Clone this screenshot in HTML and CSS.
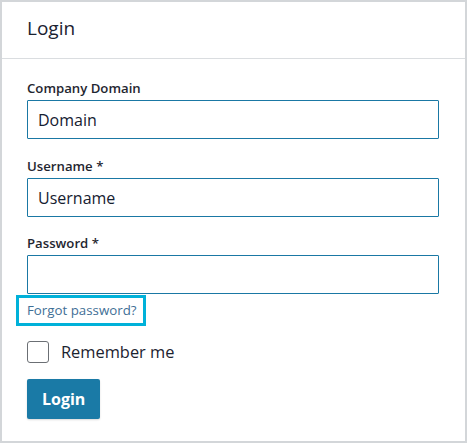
FILE: index.html
```html
<!DOCTYPE html>
<html lang="en">
<head>
<meta charset="utf-8">
<title>Login</title>
<link rel="stylesheet" href="styles.css">
</head>
<body>
<div class="card">
  <div class="card-header">Login</div>
  <form class="card-body">
    <div class="field">
      <label class="label" for="domain">Company Domain</label>
      <input class="input" id="domain" type="text" value="Domain">
    </div>
    <div class="field field-mid">
      <label class="label" for="user">Username *</label>
      <input class="input" id="user" type="text" value="Username">
    </div>
    <div class="field field-last">
      <label class="label" for="pw">Password *</label>
      <input class="input" id="pw" type="password">
    </div>
    <div class="forgot-row"><a class="forgot" href="#">Forgot password?</a></div>
    <label class="remember"><span class="check"></span><span>Remember me</span></label>
    <button class="btn" type="button">Login</button>
  </form>
</div>
</body>
</html>
```
FILE: styles.css
```css
* { box-sizing: border-box; }
html, body { margin: 0; padding: 0; }
body {
  width: 467px;
  height: 443px;
  background: #d3d6d9;
  padding: 2px;
  font-family: "Open Sans", "Noto Sans", sans-serif;
  color: #1c2330;
}
.card {
  width: 463px;
  height: 439px;
  background: #ffffff;
}
.card-header {
  height: 57px;
  border-bottom: 1px solid #dadde0;
  padding: 13px 0 0 25px;
  font-size: 19px;
  line-height: 26px;
  color: #1a2230;
}
.card-body {
  margin: 0;
  padding: 20px 25px 0 25px;
  display: flex;
  flex-direction: column;
  align-items: flex-start;
}
.field {
  display: flex;
  flex-direction: column;
  width: 412px;
  margin-bottom: 18px;
}
.field-mid { margin-bottom: 17px; }
.field-last { margin-bottom: 0; }
.label {
  font-size: 13.2px;
  line-height: 18px;
  font-weight: 600;
  color: #1f2630;
  margin-bottom: 3px;
}
.input {
  width: 412px;
  height: 39px;
  border: 1px solid #1a78a4;
  border-radius: 1px;
  padding: 0 10px;
  font-family: "Open Sans", "Noto Sans", sans-serif;
  font-size: 16px;
  color: #152030;
  background: #fff;
  outline: none;
}
.forgot-row {
  margin-top: 4px;
  margin-left: -8px;
}
.forgot {
  display: inline-block;
  padding: 3px 6px 4px 8px;
  font-size: 13.3px;
  line-height: 18px;
  color: #3f6f96;
  text-decoration: none;
  outline: 3px solid #00b1d9;
  outline-offset: 0;
}
.remember {
  display: flex;
  align-items: center;
  gap: 12px;
  margin-top: 18px;
  font-size: 16.4px;
  line-height: 22px;
  color: #1c2330;
}
.check {
  width: 22px;
  height: 22px;
  border: 1px solid #6b6f74;
  border-radius: 3px;
  background: #fff;
}
.btn {
  margin-top: 16px;
  height: 40px;
  padding: 0 15px;
  border: none;
  border-radius: 2px;
  background: #1a7aa6;
  color: #ffffff;
  font-family: "Open Sans", "Noto Sans", sans-serif;
  font-size: 16px;
  font-weight: 700;
  box-shadow: 0 1px 2px rgba(0, 0, 0, 0.15);
}
```
